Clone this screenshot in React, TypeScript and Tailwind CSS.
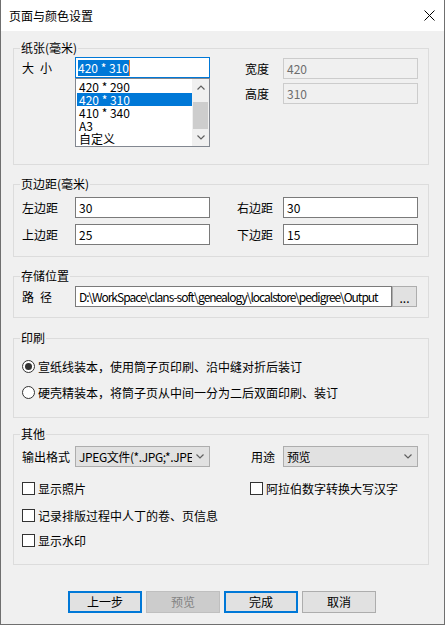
import React from "react"

// Page & colour settings dialog (WinForms look)

const SIZES = ["420 * 290", "420 * 310", "410 * 340", "A3", "自定义"]

function Group({ title, className, children }: { title: string; className: string; children: React.ReactNode }) {
  return (
    <div className={`relative ml-[12px] w-[416px] border border-[#dcdcdc] pl-[8px] ${className}`}>
      <span className="absolute -top-[8px] left-[6px] bg-[#f0f0f0] px-[1px] leading-[14px]">{title}</span>
      {children}
    </div>
  )
}

function Chevron({ up = false }: { up?: boolean }) {
  return (
    <svg width="8" height="5" viewBox="0 0 8 5" className="block">
      <polyline
        points={up ? "0.5,4.5 4,1 7.5,4.5" : "0.5,0.5 4,4 7.5,0.5"}
        fill="none"
        stroke="#606060"
        strokeWidth="1.2"
      />
    </svg>
  )
}

function TextBox({ value, width = "w-[135px]", extra = "" }: { value: string; width?: string; extra?: string }) {
  return (
    <div className={`${width} flex h-[21px] items-center overflow-hidden whitespace-nowrap border border-[#7a7a7a] bg-white pl-[3px] leading-[14px] ${extra}`}>
      {value}
    </div>
  )
}

function DisabledBox({ value }: { value: string }) {
  return (
    <div className="flex h-[21px] w-[135px] items-center border border-[#cccccc] bg-[#f0f0f0] pl-[3px] leading-[14px] text-[#6d6d6d]">
      {value}
    </div>
  )
}

function ComboBox({ value }: { value: string }) {
  return (
    <div className="flex h-[21px] w-[135px] items-center justify-between overflow-hidden whitespace-nowrap border border-[#adadad] bg-[#e1e1e1] pl-[3px] pr-[5px] leading-[14px]">
      <span className="overflow-hidden tracking-[-0.4px]">{value}</span>
      <span className="ml-[4px] shrink-0">
        <Chevron />
      </span>
    </div>
  )
}

function Radio({ checked, label }: { checked: boolean; label: string }) {
  return (
    <div className="flex h-[13px] items-center">
      <span className="flex h-[13px] w-[13px] items-center justify-center rounded-full border border-[#333333] bg-white">
        {checked && <span className="h-[7px] w-[7px] rounded-full bg-[#333333]" />}
      </span>
      <span className="ml-[3px] leading-[14px]">{label}</span>
    </div>
  )
}

function Check({ label, className = "" }: { label: string; className?: string }) {
  return (
    <div className={`flex h-[13px] items-center ${className}`}>
      <span className="h-[13px] w-[13px] shrink-0 border border-[#333333] bg-white" />
      <span className="ml-[3px] whitespace-nowrap leading-[14px]">{label}</span>
    </div>
  )
}

// two-char label with the wide gap the original dialog uses
function SpacedLabel({ a, b }: { a: string; b: string }) {
  return (
    <div className="flex h-[21px] w-[53px] items-center leading-[14px]">
      <span>{a}</span>
      <span className="ml-[6px]">{b}</span>
    </div>
  )
}

export default function App() {
  return (
    <div className="flex h-[625px] w-[445px] flex-col border-x border-b border-[#6f6f6f] bg-[#f0f0f0] font-['Noto_Sans_CJK_SC',sans-serif] text-[12px] text-black">
      {/* title bar */}
      <div className="flex h-[31px] shrink-0 items-center justify-between bg-white pl-[8px] pr-[9px]">
        <span className="leading-[14px]">页面与颜色设置</span>
        <svg width="11" height="11" viewBox="0 0 11 11" className="block">
          <path d="M0.5 0.5 L10.5 10.5 M10.5 0.5 L0.5 10.5" stroke="#000" strokeWidth="1" />
        </svg>
      </div>

      {/* 纸张 */}
      <Group title="纸张(毫米)" className="mt-[17px] h-[117px] pt-[8px]">
        <div className="flex items-start">
          <SpacedLabel a="大" b="小" />
          <div className="relative w-[135px]">
            <div className="flex h-[21px] items-center border border-[#0078d7] bg-white pl-[2px]">
              <span className="bg-[#0078d7] leading-[16px] text-white">420 * 310</span>
              <span className="h-[16px] w-[1px] bg-[#f08030]" />
            </div>
            <div className="absolute left-0 top-full z-10 flex h-[69px] w-[135px] border border-[#828790] bg-white">
              <div className="flex-1 overflow-hidden pl-[1px] pt-[1px]">
                {SIZES.map((s) => (
                  <div
                    key={s}
                    className={`h-[13px] pl-[2px] leading-[13px] ${s === "420 * 310" ? "bg-[#0078d7] text-white" : ""}`}
                  >
                    {s}
                  </div>
                ))}
              </div>
              <div className="flex w-[17px] flex-col bg-[#f0f0f0]">
                <div className="flex h-[17px] items-center justify-center">
                  <Chevron up />
                </div>
                <div className="mx-[1px] mt-[6px] h-[27px] bg-[#cdcdcd]" />
                <div className="mt-auto flex h-[17px] items-center justify-center">
                  <Chevron />
                </div>
              </div>
            </div>
          </div>
          <div className="ml-[35px] flex flex-col gap-[4px] pt-[1px]">
            <div className="flex items-center">
              <span className="w-[38px] leading-[14px]">宽度</span>
              <DisabledBox value="420" />
            </div>
            <div className="flex items-center">
              <span className="w-[38px] leading-[14px]">高度</span>
              <DisabledBox value="310" />
            </div>
          </div>
        </div>
      </Group>

      {/* 页边距 */}
      <Group title="页边距(毫米)" className="mt-[19px] flex h-[73px] flex-col gap-[6px] pt-[12px]">
        <div className="flex items-center">
          <span className="w-[53px] leading-[14px]">左边距</span>
          <TextBox value="30" />
          <span className="ml-[27px] w-[46px] leading-[14px]">右边距</span>
          <TextBox value="30" />
        </div>
        <div className="flex items-center">
          <span className="w-[53px] leading-[14px]">上边距</span>
          <TextBox value="25" />
          <span className="ml-[27px] w-[46px] leading-[14px]">下边距</span>
          <TextBox value="15" />
        </div>
      </Group>

      {/* 存储位置 */}
      <Group title="存储位置" className="mt-[19px] h-[42px] pt-[9px]">
        <div className="flex items-center">
          <SpacedLabel a="路" b="径" />
          <TextBox
            value="D:\WorkSpace\clans-soft\genealogy\localstore\pedigree\Output"
            width="w-[317px]"
            extra="tracking-[-1px]"
          />
          <button className="flex h-[21px] w-[25px] items-center justify-center border border-[#adadad] bg-[#e1e1e1] pt-[3px] leading-[14px]">
            ...
          </button>
        </div>
      </Group>

      {/* 印刷 */}
      <Group title="印刷" className="mt-[20px] flex h-[80px] flex-col gap-[13px] pt-[21px]">
        <Radio checked label="宣纸线装本，使用筒子页印刷、沿中缝对折后装订" />
        <Radio checked={false} label="硬壳精装本，将筒子页从中间一分为二后双面印刷、装订" />
      </Group>

      {/* 其他 */}
      <Group title="其他" className="mt-[16px] h-[131px] pt-[11px]">
        <div className="flex items-center">
          <span className="w-[53px] leading-[14px]">输出格式</span>
          <ComboBox value="JPEG文件(*.JPG;*.JPEG)" />
          <span className="ml-[41px] w-[32px] leading-[14px]">用途</span>
          <ComboBox value="预览" />
        </div>
        <div className="mt-[15px] flex">
          <Check label="显示照片" className="w-[228px]" />
          <Check label="阿拉伯数字转换大写汉字" />
        </div>
        <Check label="记录排版过程中人丁的卷、页信息" className="mt-[14px]" />
        <Check label="显示水印" className="mt-[12px]" />
      </Group>

      {/* buttons */}
      <div className="ml-[67px] mt-[26px] flex gap-[4px]">
        <button className="flex h-[22px] w-[74px] items-center justify-center border-2 border-[#0078d7] bg-[#e1e1e1] leading-[14px]">
          上一步
        </button>
        <button className="flex h-[22px] w-[74px] items-center justify-center border border-[#bfbfbf] bg-[#cccccc] leading-[14px] text-[#838383]">
          预览
        </button>
        <button className="flex h-[22px] w-[74px] items-center justify-center border-2 border-[#0078d7] bg-[#e1e1e1] leading-[14px]">
          完成
        </button>
        <button className="flex h-[22px] w-[74px] items-center justify-center border border-[#adadad] bg-[#e1e1e1] leading-[14px]">
          取消
        </button>
      </div>
    </div>
  )
}
